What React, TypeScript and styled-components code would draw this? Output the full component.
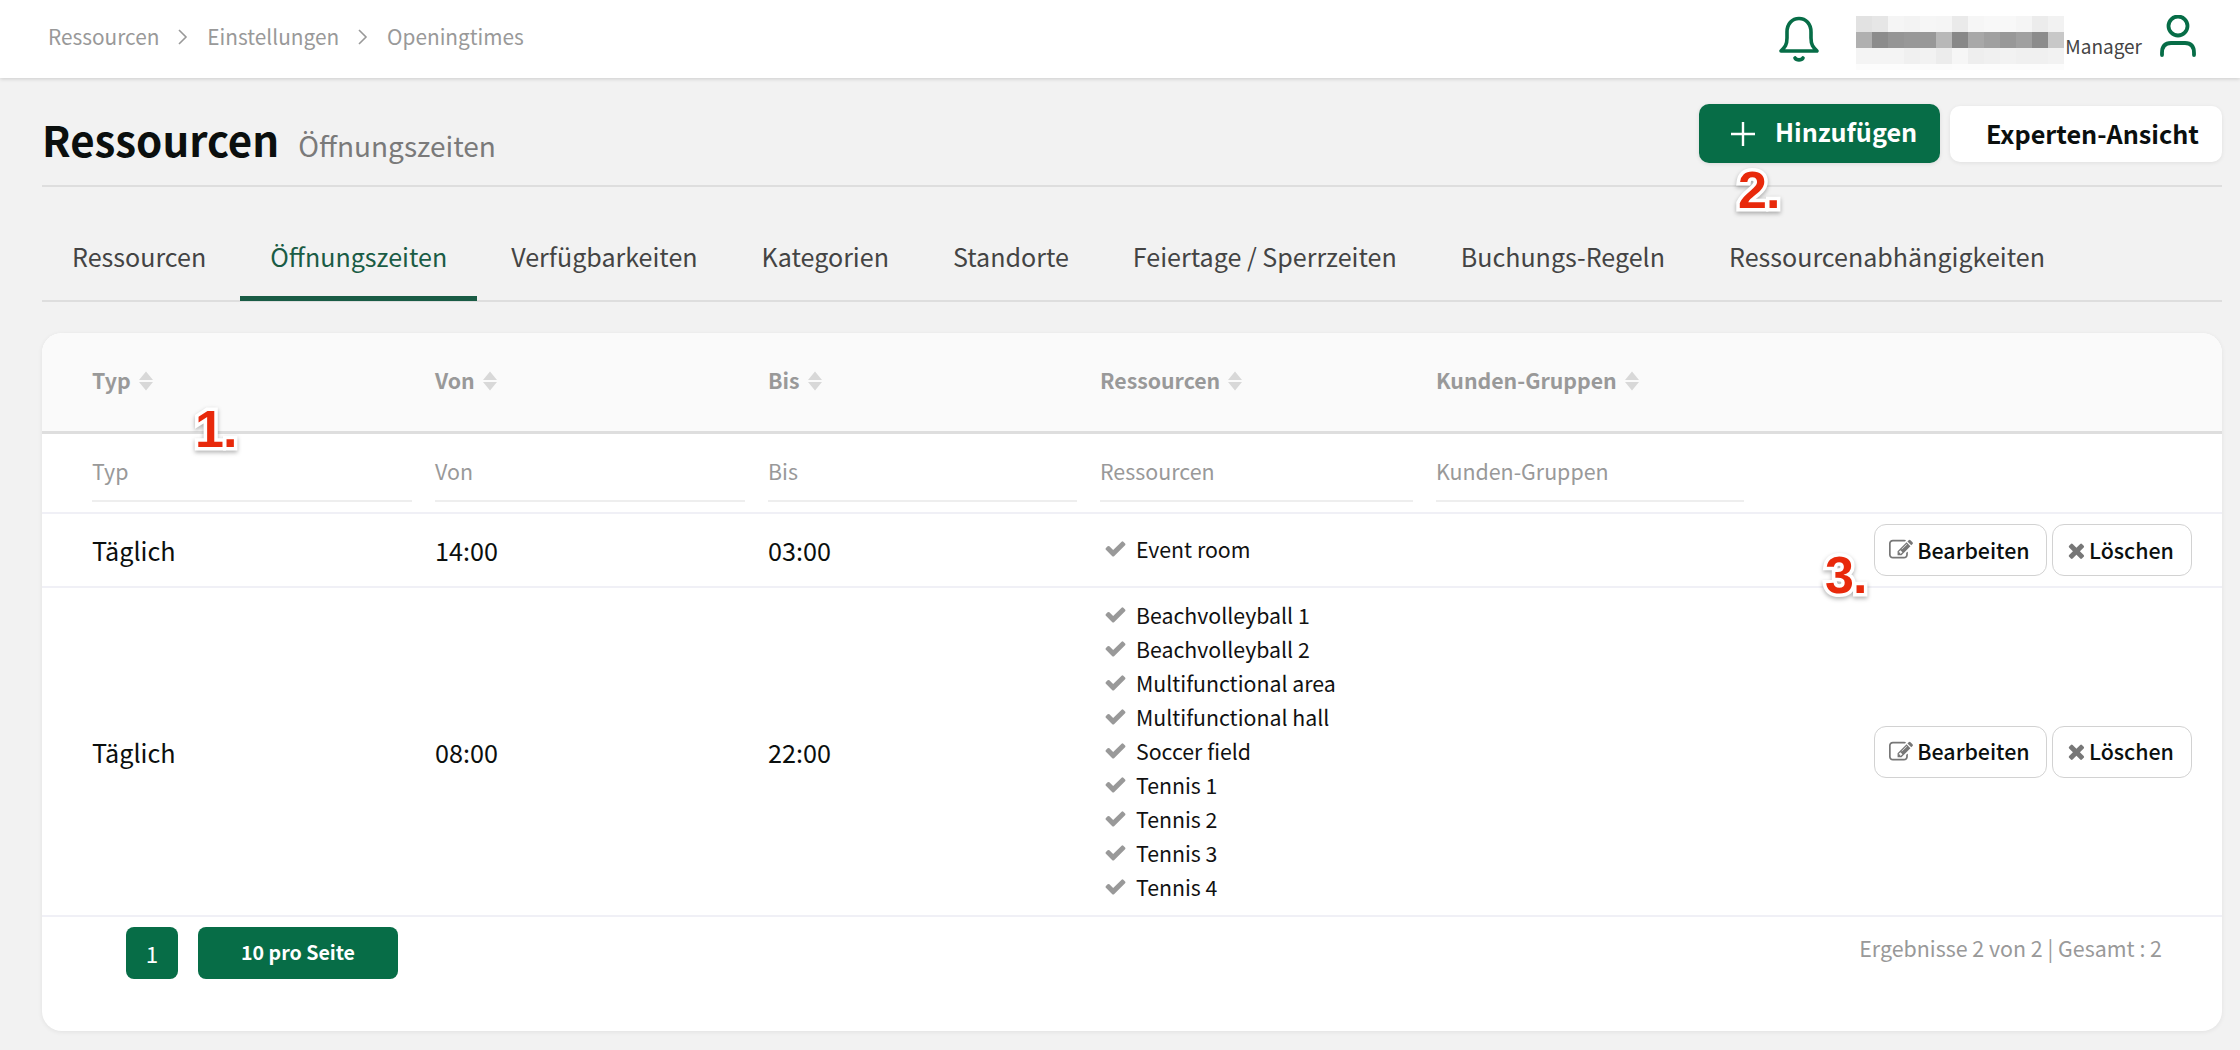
import React from "react";
import styled, { createGlobalStyle, css } from "styled-components";

const GREEN = "#076d47";
const FONT = `"Noto Sans CJK JP", "Noto Sans", sans-serif`;

const Global = createGlobalStyle`
  html, body { margin: 0; padding: 0; background: #f2f2f2; overflow: hidden; }
  body { font-family: ${FONT}; }
  * { box-sizing: border-box; }
`;

const Page = styled.div`
  position: relative;
  width: 2240px;
  height: 1050px;
  overflow: hidden;
  background: #f2f2f2;
  font-family: ${FONT};
  white-space: nowrap;
`;

const TopBar = styled.header`
  height: 78px;
  background: #fff;
  box-shadow: 0 1px 4px rgba(0, 0, 0, 0.16);
  display: flex;
  align-items: center;
  justify-content: space-between;
  padding: 0 43px 0 48px;
`;

const Crumbs = styled.nav`
  display: flex;
  align-items: center;
  gap: 18px;
  font-size: 20.8px;
  line-height: 30px;
  color: #999;
  margin-top: -6px;
`;

const CrumbSep = styled.svg`
  width: 12px;
  height: 18px;
  fill: none;
  stroke: #999;
  stroke-width: 1.6;
  margin-top: 2px;
`;

const UserArea = styled.div`
  display: flex;
  align-items: flex-start;
  height: 78px;
`;

const BellIcon = styled.svg`
  width: 44px;
  height: 48px;
  margin-top: 15px;
  margin-right: 35px;
  fill: none;
  stroke: ${GREEN};
  stroke-width: 3.6;
  stroke-linecap: round;
  stroke-linejoin: round;
`;

const Mosaic = styled.svg`
  width: 208px;
  height: 54px;
  margin-top: 16px;
  margin-right: 1px;
  display: block;
`;

const RoleLabel = styled.span`
  font-size: 19px;
  line-height: 30px;
  color: #444;
  margin-top: 31px;
  margin-right: 17px;
`;

const UserIcon = styled.svg`
  width: 38px;
  height: 42px;
  margin-top: 15px;
  fill: none;
  stroke: ${GREEN};
  stroke-width: 3.8;
  stroke-linecap: round;
`;

const Main = styled.main`
  padding: 0 18px 0 42px;
`;

const TitleRow = styled.div`
  height: 109px;
  border-bottom: 2px solid #dedede;
  display: flex;
  justify-content: space-between;
  align-items: flex-start;
`;

const TitleGroup = styled.div`
  display: flex;
  align-items: baseline;
  gap: 19px;
  padding-top: 29px;
`;

const Title = styled.h1`
  margin: 0;
  font-size: 42px;
  line-height: 64px;
  font-weight: 700;
  color: #0b0f0e;
`;

const SubTitle = styled.span`
  font-size: 28px;
  line-height: 40px;
  color: #7a7a7a;
`;

const ActionGroup = styled.div`
  display: flex;
  align-items: center;
  gap: 10px;
  padding-top: 26px;
`;

const PrimaryAction = styled.button`
  width: 241px;
  height: 59px;
  border: 0;
  border-radius: 10px;
  background: ${GREEN};
  color: #fff;
  font-family: ${FONT};
  font-size: 25.2px;
  font-weight: 700;
  display: flex;
  align-items: center;
  padding: 0 0 6px 32px;
  gap: 20px;
  box-shadow: 0 1px 4px rgba(0, 0, 0, 0.1);
`;

const PlusIcon = styled.svg`
  width: 24px;
  height: 24px;
  stroke: #fff;
  stroke-width: 2.4;
  fill: none;
  margin-top: 6px;
`;

const SecondaryAction = styled.button`
  width: 272px;
  height: 56px;
  border: 0;
  border-radius: 10px;
  background: #fff;
  color: #0b0f0e;
  font-family: ${FONT};
  font-size: 25.2px;
  font-weight: 700;
  padding: 0 0 2px 36px;
  text-align: left;
  box-shadow: 0 1px 4px rgba(0, 0, 0, 0.08);
`;

const TabBar = styled.div`
  height: 115px;
  border-bottom: 2px solid #dedede;
  display: flex;
  align-items: stretch;
  gap: 4px;
`;

const Tab = styled.div<{ $active?: boolean }>`
  padding: 45px 30px 0;
  font-size: 25.07px;
  line-height: 48px;
  margin-bottom: -1px;
  color: ${(p) => (p.$active ? "#1a5c45" : "#444")};
  border-bottom: 5px solid ${(p) => (p.$active ? "#1a5c45" : "transparent")};
`;

const Card = styled.section`
  margin-top: 31px;
  height: 698px;
  background: #fff;
  border-radius: 20px;
  box-shadow: 0 1px 5px rgba(0, 0, 0, 0.07);
  overflow: hidden;
`;

const columns = css`
  display: grid;
  grid-template-columns: 343px 333px 332px 336px 1fr;
  padding-left: 50px;
`;

const HeadRow = styled.div`
  ${columns}
  height: 101px;
  align-items: center;
  background: #fafafa;
  border-bottom: 3px solid #dedede;
`;

const HeadCell = styled.div`
  display: flex;
  align-items: center;
  gap: 8px;
  font-size: 21.3px;
  font-weight: 700;
  line-height: 30px;
  color: #999;
  margin-top: -4px;
`;

const SortIcon = styled.svg`
  width: 14px;
  height: 20px;
  fill: #d8d8d8;
  margin-top: 2px;
`;

const FilterRow = styled.div`
  ${columns}
  height: 80px;
  border-bottom: 2px solid #f0f0f6;
`;

const FilterCell = styled.div`
  margin-right: 23px;
  height: 68px;
  padding-top: 22px;
  font-size: 21.4px;
  line-height: 30px;
  color: #999;
  border-bottom: 2px solid #eeeeee;
  &:last-child {
    width: 308px;
    margin-right: 0;
  }
`;

const DataRow = styled.div<{ $height: number }>`
  ${columns}
  height: ${(p) => p.$height}px;
  align-items: center;
  border-bottom: 2px solid #f0f0f6;
  font-size: 25.2px;
  color: #0b0f0e;
`;

const ResourceList = styled.ul`
  list-style: none;
  margin: -3px 0 0;
  padding: 0;
`;

const ResourceItem = styled.li`
  display: flex;
  align-items: center;
  height: 34px;
  font-size: 21.3px;
  color: #111;
`;

const CheckMark = styled.svg`
  width: 23px;
  height: 23px;
  margin: 0 9px 0 4px;
  fill: #999;
  flex: none;
`;

const RowActions = styled.div`
  display: flex;
  justify-content: flex-end;
  gap: 5px;
  padding-right: 30px;
`;

const GhostButton = styled.button<{ $width: number }>`
  width: ${(p) => p.$width}px;
  height: 52px;
  border: 1.5px solid #d2d2d2;
  border-radius: 12px;
  background: #fff;
  color: #0b0f0e;
  font-family: ${FONT};
  font-size: 21.4px;
  font-weight: 500;
  display: flex;
  align-items: center;
  justify-content: center;
  gap: 4px;
  padding: 0 2px 2px 0;
`;

const ButtonIcon = styled.svg<{ $size: number }>`
  width: ${(p) => p.$size}px;
  height: ${(p) => p.$size}px;
  fill: #777;
  margin-top: 2px;
`;

const Footer = styled.div`
  display: flex;
  justify-content: space-between;
  align-items: flex-start;
  padding: 10px 60px 0 84px;
`;

const Pager = styled.div`
  display: flex;
  gap: 20px;
`;

const PagerButton = styled.div<{ $wide?: boolean }>`
  width: ${(p) => (p.$wide ? 200 : 52)}px;
  height: 52px;
  border-radius: 8px;
  background: ${GREEN};
  color: #fff;
  font-size: ${(p) => (p.$wide ? 19.6 : 22.4)}px;
  font-weight: ${(p) => (p.$wide ? 700 : 400)};
  display: flex;
  align-items: center;
  justify-content: center;
  padding-bottom: ${(p) => (p.$wide ? 4 : 0)}px;
`;

const Results = styled.div`
  font-size: 21.4px;
  line-height: 42px;
  color: #999;
`;

const Callout = styled.span<{ $x: number; $y: number }>`
  position: absolute;
  left: ${(p) => p.$x}px;
  top: ${(p) => p.$y}px;
  font-family: "Liberation Sans", Arial, sans-serif;
  font-size: 52px;
  line-height: 50px;
  font-weight: 700;
  letter-spacing: -1px;
  color: #e8290b;
  -webkit-text-stroke: 7px #fff;
  paint-order: stroke fill;
  filter: drop-shadow(0 2px 2px rgba(0, 0, 0, 0.3));
`;

const mosaicRows: [number, string[]][] = [
  [16, "e2,e6,f5,f3,f6,f5,ea,f6,f8,f8,f5,ec,f2".split(",")],
  [16, "b0,8c,95,98,98,b8,88,a8,a0,98,a0,8c,c8".split(",")],
  [16, "f4,f4,f4,f0,f2,ec,f6,ee,f0,f2,f0,f0,f2".split(",")],
  [6, "fc,fc,fc,fc,fb,fb,fc,fc,fc,fc,fc,fc,fc".split(",")],
];

const CHECK =
  "M1671 566q0 40-28 68l-724 724-136 136q-28 28-68 28t-68-28l-136-136-362-362q-28-28-28-68t28-68l136-136q28-28 68-28t68 28l294 295 656-657q28-28 68-28t68 28l136 136q28 28 28 68z";
const TIMES =
  "M1298 1322q0 40-28 68l-136 136q-28 28-68 28t-68-28l-294-294-294 294q-28 28-68 28t-68-28l-136-136q-28-28-28-68t28-68l294-294-294-294q-28-28-28-68t28-68l136-136q28-28 68-28t68 28l294 294 294-294q28-28 68-28t68 28l136 136q28 28 28 68t-28 68l-294 294 294 294q28 28 28 68z";
const EDIT =
  "M888 1184l116-116-152-152-116 116v56h96v96h56zm440-720q-16-16-33 1l-350 350q-17 17-1 33t33-1l350-350q17-17 1-33zm80 594v190q0 119-84.5 203.5t-203.5 84.5h-832q-119 0-203.5-84.5t-84.5-203.5v-832q0-119 84.5-203.5t203.5-84.5h832q63 0 117 25 15 7 18 23 3 17-9 29l-49 49q-14 14-32 8-23-6-45-6h-832q-66 0-113 47t-47 113v832q0 66 47 113t113 47h832q66 0 113-47t47-113v-126q0-13 9-22l64-64q15-15 35-7t20 29zm-96-738l288 288-672 672h-288v-288zm444 132l-92 92-288-288 92-92q28-28 68-28t68 28l152 152q28 28 28 68t-28 68z";

const Separator = () => (
  <CrumbSep viewBox="0 0 12 18">
    <path d="M2 2l7 7-7 7" />
  </CrumbSep>
);

const Actions = () => (
  <RowActions>
    <GhostButton $width={173} type="button">
      <ButtonIcon $size={24} viewBox="0 0 1792 1792">
        <path d={EDIT} />
      </ButtonIcon>
      Bearbeiten
    </GhostButton>
    <GhostButton $width={140} type="button">
      <ButtonIcon $size={17} viewBox="100 240 1220 1320">
        <path d={TIMES} />
      </ButtonIcon>
      Löschen
    </GhostButton>
  </RowActions>
);

const Resources = ({ items }: { items: string[] }) => (
  <ResourceList>
    {items.map((item) => (
      <ResourceItem key={item}>
        <CheckMark viewBox="0 0 1792 1792">
          <path d={CHECK} />
        </CheckMark>
        {item}
      </ResourceItem>
    ))}
  </ResourceList>
);

const tabs = [
  "Ressourcen",
  "Öffnungszeiten",
  "Verfügbarkeiten",
  "Kategorien",
  "Standorte",
  "Feiertage / Sperrzeiten",
  "Buchungs-Regeln",
  "Ressourcenabhängigkeiten",
];
const heads = ["Typ", "Von", "Bis", "Ressourcen", "Kunden-Gruppen"];

export default function App() {
  return (
    <Page>
      <Global />
      <TopBar>
        <Crumbs>
          <span>Ressourcen</span>
          <Separator />
          <span>Einstellungen</span>
          <Separator />
          <span>Openingtimes</span>
        </Crumbs>
        <UserArea>
          <BellIcon viewBox="0 0 44 48">
            <path d="M4 36c4-4 6-6 6-13v-6C10 9 15 3.500 22 3.500S34 9 34 17v6c0 7 2 9 6 13z" />
            <path d="M18 43c1.500 2.500 6.500 2.500 8 0" />
          </BellIcon>
          <Mosaic viewBox="0 0 208 54" aria-hidden="true">
            {mosaicRows.map(([h, row], r) => {
              const y = mosaicRows.slice(0, r).reduce((s, x) => s + x[0], 0);
              return row.map((c, i) => (
                <rect key={`${r}-${i}`} x={i * 16} y={y} width={16} height={h} fill={`#${c}${c}${c}`} />
              ));
            })}
          </Mosaic>
          <RoleLabel>Manager</RoleLabel>
          <UserIcon viewBox="0 0 38 42">
            <circle cx="19" cy="11" r="9.500" />
            <path d="M3 40v-2c0-7 3-10 9-10h14c6 0 9 3 9 10v2" />
          </UserIcon>
        </UserArea>
      </TopBar>
      <Main>
        <TitleRow>
          <TitleGroup>
            <Title>Ressourcen</Title>
            <SubTitle>Öffnungszeiten</SubTitle>
          </TitleGroup>
          <ActionGroup>
            <PrimaryAction type="button">
              <PlusIcon viewBox="0 0 24 24">
                <path d="M12 0v24M0 12h24" />
              </PlusIcon>
              Hinzufügen
            </PrimaryAction>
            <SecondaryAction type="button">Experten-Ansicht</SecondaryAction>
          </ActionGroup>
        </TitleRow>
        <TabBar>
          {tabs.map((t) => (
            <Tab key={t} $active={t === "Öffnungszeiten"}>
              {t}
            </Tab>
          ))}
        </TabBar>
        <Card>
          <HeadRow>
            {heads.map((h) => (
              <HeadCell key={h}>
                {h}
                <SortIcon viewBox="0 0 14 20">
                  <path d="M7 0.500l7 8.500H0zM7 19.500l7-8.500H0z" />
                </SortIcon>
              </HeadCell>
            ))}
          </HeadRow>
          <FilterRow>
            {heads.map((h) => (
              <FilterCell key={h}>{h}</FilterCell>
            ))}
          </FilterRow>
          <DataRow $height={74}>
            <div>Täglich</div>
            <div>14:00</div>
            <div>03:00</div>
            <Resources items={["Event room"]} />
            <Actions />
          </DataRow>
          <DataRow $height={329}>
            <div>Täglich</div>
            <div>08:00</div>
            <div>22:00</div>
            <Resources
              items={[
                "Beachvolleyball 1",
                "Beachvolleyball 2",
                "Multifunctional area",
                "Multifunctional hall",
                "Soccer field",
                "Tennis 1",
                "Tennis 2",
                "Tennis 3",
                "Tennis 4",
              ]}
            />
            <Actions />
          </DataRow>
          <Footer>
            <Pager>
              <PagerButton>1</PagerButton>
              <PagerButton $wide>10 pro Seite</PagerButton>
            </Pager>
            <Results>Ergebnisse 2 von 2 | Gesamt : 2</Results>
          </Footer>
        </Card>
      </Main>
      <Callout $x={195} $y={404}>1.</Callout>
      <Callout $x={1738} $y={165}>2.</Callout>
      <Callout $x={1825} $y={550}>3.</Callout>
    </Page>
  );
}
